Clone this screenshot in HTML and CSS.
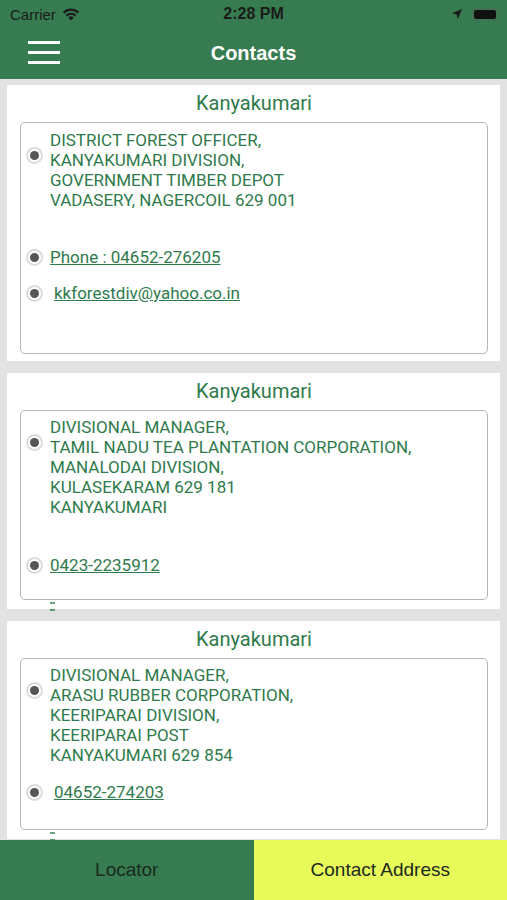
FILE: index.html
```html
<!DOCTYPE html>
<html lang="en">
<head>
    <meta charset="UTF-8">
    <meta name="viewport" content="width=device-width, initial-scale=1.0">
    <title>Contacts</title>
    <link rel="stylesheet" href="styles.css">
</head>
<body>
    <div class="top">
        <div class="status">
            <div class="status-left">
                <span>Carrier</span>
                <svg class="wifi" width="18" height="13" viewBox="0 0 18 13">
                    <path d="M9 12.5 L6.3 9.6 A3.8 3.8 0 0 1 11.7 9.6 Z" fill="#1b1b1b"/>
                    <path d="M4.4 7.6 A6.6 6.6 0 0 1 13.6 7.6" stroke="#1b1b1b" stroke-width="2.2" fill="none"/>
                    <path d="M1.6 4.6 A10.5 10.5 0 0 1 16.4 4.6" stroke="#1b1b1b" stroke-width="2.2" fill="none"/>
                </svg>
            </div>
            <div class="clock">2:28 PM</div>
            <div class="status-right">
                <svg width="12" height="12" viewBox="0 0 12 12">
                    <path d="M11 1 L1 5.2 L5.6 6.4 L6.8 11 Z" fill="#1b1b1b"/>
                </svg>
                <div class="battery"><div class="battery-fill"></div></div>
            </div>
        </div>
        <div class="header">
            <div class="menu">
                <span></span><span></span><span></span>
            </div>
            <h1>Contacts</h1>
        </div>
    </div>

    <div class="list">
        <div class="card">
            <h2>Kanyakumari</h2>
            <div class="box box-1">
                <div class="row address">
                    <span class="radio"></span>
                    <p>DISTRICT FOREST OFFICER,<br>KANYAKUMARI DIVISION,<br>GOVERNMENT TIMBER DEPOT<br>VADASERY, NAGERCOIL 629 001</p>
                </div>
                <div class="row link gap-lg">
                    <span class="radio"></span>
                    <a href="#">Phone : 04652-276205</a>
                </div>
                <div class="row link gap-sm">
                    <span class="radio"></span>
                    <a href="#" class="shift">kkforestdiv@yahoo.co.in</a>
                </div>
            </div>
        </div>

        <div class="card">
            <h2>Kanyakumari</h2>
            <div class="box box-2">
                <div class="row address">
                    <span class="radio"></span>
                    <p>DIVISIONAL MANAGER,<br>TAMIL NADU TEA PLANTATION CORPORATION,<br>MANALODAI DIVISION,<br>KULASEKARAM 629 181<br>KANYAKUMARI</p>
                </div>
                <div class="row link gap-xl">
                    <span class="radio"></span>
                    <a href="#">0423-2235912</a>
                </div>
            </div>
            <div class="stub"><span></span><span></span></div>
        </div>

        <div class="card">
            <h2>Kanyakumari</h2>
            <div class="box box-3">
                <div class="row address">
                    <span class="radio"></span>
                    <p>DIVISIONAL MANAGER,<br>ARASU RUBBER CORPORATION,<br>KEERIPARAI DIVISION,<br>KEERIPARAI POST<br>KANYAKUMARI 629 854</p>
                </div>
                <div class="row link gap-md">
                    <span class="radio"></span>
                    <a href="#" class="shift">04652-274203</a>
                </div>
            </div>
            <div class="stub"><span></span><span></span></div>
        </div>
    </div>

    <div class="tabs">
        <div class="tab tab-locator">Locator</div>
        <div class="tab tab-active">Contact Address</div>
    </div>
</body>
</html>
```

FILE: styles.css
```css
body {
    margin: 0;
    height: 100vh;
    display: flex;
    flex-direction: column;
    font-family: Roboto, "Liberation Sans", sans-serif;
    background-color: #e2e2e2;
    overflow: hidden;
}
.top {
    background-color: #377c50;
}
.status {
    height: 28px;
    display: flex;
    align-items: center;
    justify-content: space-between;
    padding: 0 9px 0 10px;
    font-family: "Liberation Sans", Arial, sans-serif;
    color: #1b1b1b;
    position: relative;
}
.status-left {
    display: flex;
    align-items: center;
    gap: 6px;
    font-size: 15px;
}
.clock {
    position: absolute;
    left: 0;
    right: 0;
    text-align: center;
    font-size: 16px;
    font-weight: bold;
}
.status-right {
    display: flex;
    align-items: center;
    gap: 9px;
}
.battery {
    width: 22px;
    height: 9px;
    border: 1px solid #4c6b55;
    border-radius: 3px;
    padding: 1px;
    position: relative;
}
.battery-fill {
    width: 100%;
    height: 100%;
    background-color: #111;
    border-radius: 2px;
}
.header {
    height: 51px;
    display: flex;
    align-items: center;
    justify-content: center;
    position: relative;
}
.menu {
    position: absolute;
    left: 28px;
    top: 13px;
    display: flex;
    flex-direction: column;
    gap: 7px;
}
.menu span {
    display: block;
    width: 32px;
    height: 3px;
    background-color: #fff;
}
h1 {
    margin: 0;
    color: #fff;
    font-family: "Liberation Sans", Arial, sans-serif;
    font-size: 20px;
    font-weight: bold;
}
.list {
    flex: 1;
    overflow: hidden;
    padding: 6px 7px 0;
    display: flex;
    flex-direction: column;
    gap: 12px;
}
.card {
    background-color: #fff;
    padding: 5px 12px 7px 13px;
    flex-shrink: 0;
}
h2 {
    margin: 0 0 6px;
    text-align: center;
    font-size: 20px;
    line-height: 26px;
    font-weight: normal;
    color: #2f7a4c;
}
.box {
    border: 1px solid #b5b5b5;
    border-radius: 5px;
    padding: 6px 5px 24px;
}
.box-1 {
    padding-top: 7px;
    padding-bottom: 50px;
}
.box-3 {
    padding-bottom: 27px;
}
.row {
    display: flex;
    gap: 8px;
}
.address {
    align-items: flex-start;
}
.address .radio {
    margin-top: 17px;
}
.link {
    align-items: center;
}
.gap-sm {
    margin-top: 16px;
}
.gap-md {
    margin-top: 17px;
}
.gap-lg {
    margin-top: 37px;
}
.gap-xl {
    margin-top: 38px;
}
.row p {
    margin: 0;
    font-size: 17px;
    line-height: 20px;
    color: #2f7a4c;
}
.row a {
    font-size: 17px;
    line-height: 20px;
    color: #2f7a4c;
}
.row a.shift {
    margin-left: 4px;
}
.radio {
    width: 13px;
    height: 13px;
    border: 2px solid #dcdcdc;
    border-radius: 50%;
    flex-shrink: 0;
    display: flex;
    align-items: center;
    justify-content: center;
    margin-right: -1px;
}
.radio::after {
    content: "";
    width: 9px;
    height: 9px;
    border-radius: 50%;
    background-color: #555;
}
.stub {
    height: 0;
    margin-left: 30px;
}
.stub span {
    display: block;
    width: 5px;
    height: 2px;
    margin-top: 2px;
    background-color: #2f7a4c;
    opacity: 0.7;
}
.stub span + span {
    margin-top: 5px;
}
.tabs {
    height: 60px;
    display: flex;
    flex-shrink: 0;
}
.tab {
    flex: 1;
    display: flex;
    align-items: center;
    justify-content: center;
    font-family: "Liberation Sans", Arial, sans-serif;
    font-size: 19px;
    color: #1a2a1e;
}
.tab-locator {
    background-color: #377c50;
}
.tab-active {
    background-color: #e8f95a;
}
```
